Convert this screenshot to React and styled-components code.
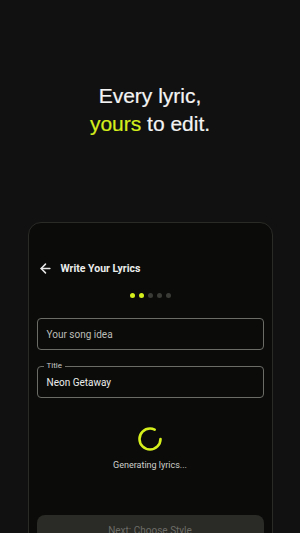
import React from 'react';
import styled, { createGlobalStyle } from 'styled-components';
import { ArrowLeft } from 'lucide-react';

const GlobalStyle = createGlobalStyle`
    html, body {
        margin: 0;
        padding: 0;
        background: #111111;
        overflow: hidden;
    }
`;

const LIME = '#d4ef1c';

const Page = styled.div`
    height: 533px;
    display: flex;
    flex-direction: column;
    align-items: center;
    overflow: hidden;
    font-family: Roboto, 'Liberation Sans', sans-serif;
`;

const Headline = styled.h1`
    margin: 0;
    padding-top: 82px;
    font-family: 'Liberation Sans', Arial, sans-serif;
    font-weight: 400;
    font-size: 21px;
    line-height: 28px;
    color: #f4f4f4;
    text-align: center;
    -webkit-text-stroke: 0.2px currentColor;
`;

const Accent = styled.span`
    color: ${LIME};
`;

const Card = styled.div`
    margin-top: 84px;
    width: 245px;
    min-height: 340px;
    box-sizing: border-box;
    border: 1px solid #2a2b27;
    border-radius: 13px;
    background: #0b0c0a;
    padding: 0 8px;
    display: flex;
    flex-direction: column;
`;

const Header = styled.div`
    display: flex;
    align-items: center;
    gap: 8px;
    height: 20px;
    margin-top: 35px;
    padding-left: 1px;
    color: #e8e8e8;
`;

const Title = styled.h2`
    margin: 0;
    font-size: 10.5px;
    font-weight: 700;
    color: #ececec;
`;

const Dots = styled.div`
    display: flex;
    justify-content: center;
    gap: 4px;
    margin-top: 15px;
`;

const Dot = styled.span`
    width: 5px;
    height: 5px;
    border-radius: 50%;
    background: ${p => (p.$active ? LIME : '#3a3b36')};
`;

const Field = styled.div`
    position: relative;
    height: 32px;
    box-sizing: border-box;
    margin-top: ${p => p.$gap}px;
    border: 1px solid #6c6c66;
    border-radius: 4px;
    display: flex;
    align-items: center;
    padding: 0 9px;
    font-size: 10px;
    color: ${p => (p.$filled ? '#ececec' : '#bdbdb8')};
`;

const Legend = styled.span`
    position: absolute;
    top: -6px;
    left: 6px;
    padding: 0 3px;
    background: #0b0c0a;
    font-size: 8px;
    line-height: 10px;
    color: #c8c8c4;
`;

const Loading = styled.div`
    display: flex;
    flex-direction: column;
    align-items: center;
    margin-top: 28px;
    gap: 8px;
`;

const Status = styled.span`
    font-size: 9px;
    color: #cfcfcb;
`;

const NextButton = styled.button`
    margin-top: 45px;
    height: 38px;
    border: none;
    border-radius: 8px;
    background: #2a2a26;
    color: #6d6d67;
    font-family: Roboto, 'Liberation Sans', sans-serif;
    font-size: 10px;
    padding-bottom: 8px;
`;

const Spinner = () => (
    <svg width="26" height="26" viewBox="0 0 26 26">
        <circle
            cx="13"
            cy="13"
            r="10.5"
            fill="none"
            stroke={LIME}
            strokeWidth="2.6"
            strokeLinecap="round"
            strokeDasharray="54 66"
        />
    </svg>
);

export default function App() {
    return (
        <Page>
            <GlobalStyle />
            <Headline>
                Every lyric,<br />
                <Accent>yours</Accent> to edit.
            </Headline>
            <Card>
                <Header>
                    <ArrowLeft size={15} strokeWidth={2.4} />
                    <Title>Write Your Lyrics</Title>
                </Header>
                <Dots>
                    {[true, true, false, false, false].map((on, i) => (
                        <Dot key={i} $active={on} />
                    ))}
                </Dots>
                <Field $gap={20}>Your song idea</Field>
                <Field $gap={16} $filled>
                    <Legend>Title</Legend>
                    Neon Getaway
                </Field>
                <Loading>
                    <Spinner />
                    <Status>Generating lyrics...</Status>
                </Loading>
                <NextButton>Next: Choose Style</NextButton>
            </Card>
        </Page>
    );
}
